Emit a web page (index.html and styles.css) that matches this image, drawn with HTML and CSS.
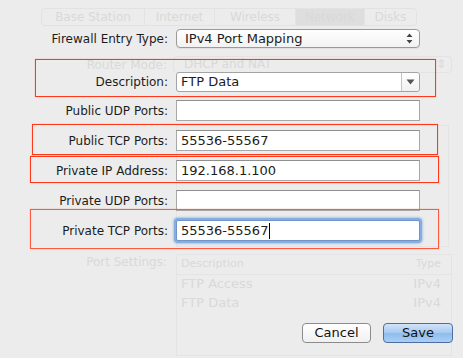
FILE: index.html
```html
<!DOCTYPE html>
<html lang="en">
<head>
    <meta charset="UTF-8">
    <title>Firewall Entry</title>
    <link rel="stylesheet" href="styles.css">
</head>
<body>
    <!-- base station window, dimmed behind the sheet -->
    <div class="backdrop">
        <div class="tabs">
            <span class="tab tab-base">Base Station</span>
            <span class="tab tab-internet">Internet</span>
            <span class="tab tab-wireless">Wireless</span>
            <span class="tab tab-network selected">Network</span>
            <span class="tab tab-disks">Disks</span>
        </div>
        <div class="bg-row bg-router">
            <span class="bg-label">Router Mode:</span>
            <div class="bg-popup">DHCP and NAT <span class="bg-arrows">&#8661;</span></div>
        </div>
        <div class="bg-row bg-reserv">
            <div class="bg-table"></div>
        </div>
        <div class="bg-row bg-ports">
            <span class="bg-label">Port Settings:</span>
            <div class="bg-table ports-table">
                <div class="bg-head"><span>Description</span><span>Type</span></div>
                <div class="bg-line"><span>FTP Access</span><span>IPv4</span></div>
                <div class="bg-line"><span>FTP Data</span><span>IPv4</span></div>
            </div>
        </div>
    </div>

    <!-- the sheet -->
    <div class="sheet">
        <div class="row row-type">
            <label>Firewall Entry Type:</label>
            <div class="popup">
                <span>IPv4 Port Mapping</span>
                <svg class="updown" width="7" height="11" viewBox="0 0 7 11">
                    <path d="M3.5 0.5 L6.5 4 L0.5 4 Z M0.5 7 L6.5 7 L3.5 10.5 Z" fill="#444"/>
                </svg>
            </div>
        </div>
        <div class="row row-desc">
            <label>Description:</label>
            <div class="combo">
                <span class="combo-text">FTP Data</span>
                <span class="combo-btn">
                    <svg width="9" height="6" viewBox="0 0 9 6"><path d="M0.5 0.5 L8.5 0.5 L4.5 5.5 Z" fill="#555"/></svg>
                </span>
            </div>
        </div>
        <div class="row row-first">
            <label>Public UDP Ports:</label>
            <div class="field"></div>
        </div>
        <div class="row">
            <label>Public TCP Ports:</label>
            <div class="field">55536-55567</div>
        </div>
        <div class="row">
            <label>Private IP Address:</label>
            <div class="field">192.168.1.100</div>
        </div>
        <div class="row">
            <label>Private UDP Ports:</label>
            <div class="field"></div>
        </div>
        <div class="row">
            <label>Private TCP Ports:</label>
            <div class="field focused">55536-55567<span class="caret"></span></div>
        </div>
        <div class="actions">
            <button class="btn btn-cancel">Cancel</button>
            <button class="btn btn-save">Save</button>
        </div>
    </div>

    <!-- red annotation boxes -->
    <div class="mark mark-1"></div>
    <div class="mark mark-2"></div>
    <div class="mark mark-3"></div>
    <div class="mark mark-4"></div>
</body>
</html>
```

FILE: styles.css
```css
body {
    margin: 0;
    width: 463px;
    height: 358px;
    overflow: hidden;
    position: relative;
    background-color: #ececec;
    font-family: 'DejaVu Sans', sans-serif;
    color: #1c1c1c;
}

/* dimmed window behind */

.backdrop {
    padding-top: 8px;
    color: #d9d9d9;
    font-size: 12px;
}

.tabs {
    display: flex;
    margin-left: 41px;
    width: 376px;
    height: 18px;
    box-sizing: border-box;
    border: 1px solid #e2e2e2;
    border-radius: 4px;
}

.tab {
    display: flex;
    align-items: center;
    justify-content: center;
    border-right: 1px solid #e3e3e3;
}

.tab-base { width: 102px; }
.tab-internet { width: 69px; }
.tab-wireless { width: 80px; }
.tab-network { width: 68px; }
.tab-disks { flex: 1; border-right: none; }

.tab.selected {
    background-color: #dedede;
}

.bg-row {
    display: flex;
}

.bg-label {
    width: 167px;
    text-align: right;
}

.bg-router {
    margin-top: 30px;
    align-items: center;
}

.bg-popup {
    margin-left: 6px;
    width: 279px;
    height: 17px;
    box-sizing: border-box;
    border: 1px solid #e3e3e3;
    border-radius: 4px;
    padding-left: 10px;
    line-height: 15px;
    position: relative;
}

.bg-arrows {
    position: absolute;
    right: 5px;
    top: 0;
}

.bg-reserv {
    margin-top: 52px;
    padding-left: 176px;
}

.bg-table {
    width: 271px;
    height: 120px;
    border: 1px solid #e4e4e4;
}

.bg-head, .bg-line {
    display: flex;
    justify-content: space-between;
    padding: 0 10px 0 4px;
    height: 19px;
    line-height: 17px;
}

.bg-head {
    border-bottom: 1px solid #e4e4e4;
    font-size: 11px;
}

.bg-ports {
    margin-top: 7px;
}

.bg-ports .bg-label {
    padding-top: 1px;
}

.ports-table {
    margin-left: 9px;
    width: 274px;
    height: 100px;
    font-size: 13px;
}

.ports-table .bg-head {
    font-size: 11px;
}

/* sheet */

.sheet {
    position: absolute;
    top: 0;
    left: 0;
    right: 0;
    bottom: 0;
    padding-top: 29px;
}

.row {
    display: flex;
    align-items: center;
    height: 21px;
    margin-top: 9px;
}

.row label {
    width: 168px;
    text-align: right;
    font-size: 12px;
    margin-right: 8px;
}

.row-type {
    height: 19px;
    margin-top: 0;
}

.row-desc {
    height: 20px;
    margin-top: 24px;
}

.row-first {
    margin-top: 8px;
}

.popup {
    width: 244px;
    height: 19px;
    box-sizing: border-box;
    border: 1px solid #9a9a9a;
    border-radius: 4px;
    background: linear-gradient(#ffffff, #f2f2f2);
    display: flex;
    align-items: center;
    justify-content: space-between;
    padding: 0 6px 0 8px;
    font-size: 13px;
    box-shadow: 0 1px 0 rgba(0, 0, 0, 0.05);
}

.combo {
    width: 244px;
    height: 20px;
    box-sizing: border-box;
    border: 1px solid #a3a3a3;
    border-radius: 3px;
    background-color: #fff;
    display: flex;
    font-size: 13px;
}

.combo-text {
    flex: 1;
    padding-left: 4px;
    line-height: 18px;
}

.combo-btn {
    width: 17px;
    border-left: 1px solid #c4c4c4;
    display: flex;
    align-items: center;
    justify-content: center;
    background: linear-gradient(#ffffff, #f1f1f1);
    border-radius: 0 3px 3px 0;
}

.field {
    width: 244px;
    height: 21px;
    box-sizing: border-box;
    border: 1px solid #a8a8a8;
    border-top-color: #8f8f8f;
    background-color: #fff;
    padding-left: 4px;
    font-size: 13px;
    line-height: 19px;
    display: flex;
    align-items: center;
}

.field.focused {
    border-color: #6f95c6;
    box-shadow: 0 0 0 2px #86aee0, 0 0 2px 3px rgba(120, 165, 220, 0.5);
    border-radius: 2px;
}

.caret {
    display: inline-block;
    width: 1px;
    height: 16px;
    margin-left: 1px;
    background-color: #000;
}

.actions {
    display: flex;
    justify-content: flex-end;
    gap: 12px;
    margin-top: 82px;
    padding-right: 10px;
}

.btn {
    height: 20px;
    box-sizing: border-box;
    border-radius: 4px;
    font-family: 'DejaVu Sans', sans-serif;
    font-size: 13px;
    color: #111;
    padding: 0;
    line-height: 18px;
}

.btn-cancel {
    width: 69px;
    border: 1px solid #8c8c8c;
    background: linear-gradient(#ffffff, #f0f0f0);
}

.btn-save {
    width: 70px;
    border: 1px solid #4e6f9e;
    background: linear-gradient(#d2e4f8, #a4c9f1 50%, #8ebcee 51%, #a8cff6);
}

/* annotations */

.mark {
    position: absolute;
    box-sizing: border-box;
    border: 1px solid #ff3a1c;
    box-shadow: 0 0 1px rgba(255, 60, 30, 0.6);
}

.mark-1 { left: 35px; top: 59px; width: 401px; height: 38px; }
.mark-2 { left: 32px; top: 124px; width: 406px; height: 31px; }
.mark-3 { left: 30px; top: 156px; width: 409px; height: 27px; }
.mark-4 { left: 30px; top: 209px; width: 409px; height: 40px; border-color: #ff5a40; }
```
